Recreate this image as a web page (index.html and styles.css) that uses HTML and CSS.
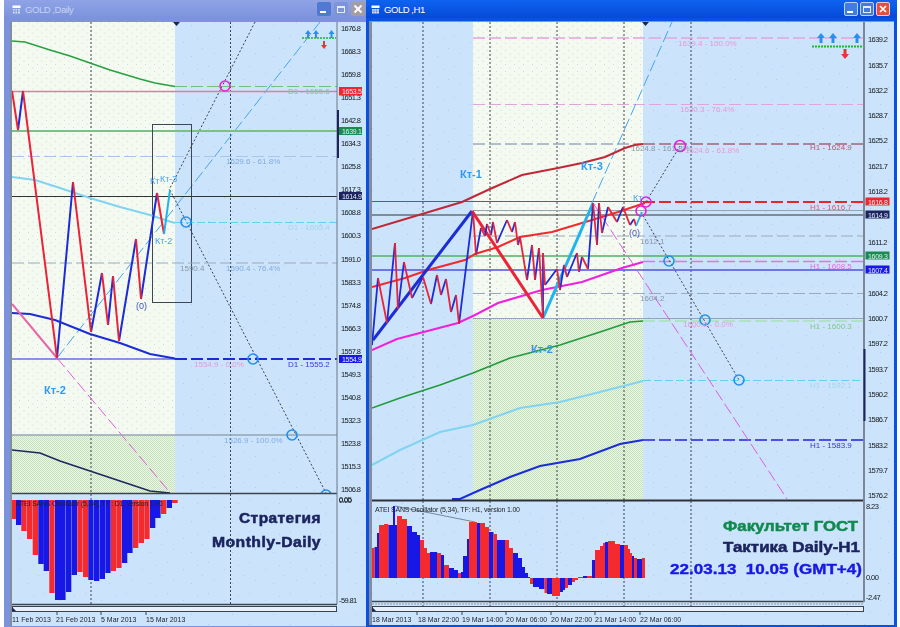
FILE: index.html
```html
<!DOCTYPE html>
<html lang="ru">
<head>
<meta charset="utf-8">
<title>GOLD</title>
<link rel="stylesheet" href="styles.css">
</head>
<body>
<main class="desk">

<section class="win win-left">
  <header class="titlebar">
    <svg class="winicon" viewBox="0 0 9 9"><rect x=".5" y=".5" width="8" height="2.5" class="wi-a"/><path d="M1 4h7v4.5H1z" class="wi-b"/><path d="M3 4v4.500M5.500 4v4.500M1 6h7" class="wi-c"/></svg>
    <span class="title">GOLD ,Daily</span>
    <span class="btns">
      <span class="btn btn-min"><i class="dash"></i></span>
      <span class="btn btn-max"><i class="box"></i></span>
      <span class="btn btn-close"><svg viewBox="0 0 14 14"><path d="M3.500 3.500l7 7M10.500 3.500l-7 7"/></svg></span>
    </span>
  </header>
  <div class="client">
    <svg class="chart" viewBox="12 22 350 604" width="350" height="604">
      <defs>
        <pattern id="dotsB" width="41" height="31" patternUnits="userSpaceOnUse"><rect width="41" height="31" class="f-blue"/><path d="M3 4h1v1H3zM19 11h1v1h-1zM33 7h1v1h-1zM9 22h1v1H9zM27 25h1v1h-1zM38 17h1v1h-1z" class="f-speck"/></pattern>
        <pattern id="dotsC" width="9" height="7" patternUnits="userSpaceOnUse"><rect width="9" height="7" class="f-cream"/><path d="M1 1h1v1H1zM5.500 4.500h1v1h-1z" class="f-speckc"/></pattern>
        <pattern id="hatch" width="2" height="2" patternUnits="userSpaceOnUse"><rect width="2" height="2" class="f-hl"/><path d="M0 0h1v1H0zM1 1h1v1H1z" class="f-hd"/></pattern>
        <clipPath id="clipL"><rect x="12" y="22" width="325" height="471"/></clipPath>
      </defs>
      <rect x="12" y="22" width="350" height="604" fill="url(#dotsB)"/>
      <rect x="12" y="22" width="163" height="413" fill="url(#dotsC)"/>
      <rect x="12" y="435" width="163" height="58" fill="url(#hatch)"/>
      <g clip-path="url(#clipL)">
        <path class="vdot" d="M91 22V493M230.500 22V493"/>
        <path class="s-lblue d-long" d="M57 358L320 22"/>
        <path class="s-black d-dot" d="M255 22L169 190M170 190L326 493"/>
        <polyline class="s-green w15" points="12,41 25,42 50,50 70,56 90,63 110,70 140,79 155,83 175,86.500"/>
        <path class="s-green2 d-long" d="M175 86.500H337"/>
        <path class="s-pink w15" d="M12 91.500H337"/>
        <path class="s-lgreen w2" d="M12 131H337"/>
        <path class="s-paleblue d-long w1" d="M12 156.500H337"/>
        <rect class="s-box" x="152.500" y="124.500" width="39" height="178"/>
        <path class="s-dark" d="M12 196.500H337"/>
        <polyline class="s-sky w2" points="12,177 35,180 60,188 90,198 120,207 150,215 165,220 175,223"/>
        <path class="s-sky2 d-mid" d="M175 222.500H337"/>
        <path class="s-gray d-long w1" d="M12 263H337"/>
        <path class="s-blue" d="M12 359H175"/>
        <polyline class="s-blue w2" points="12,313 30,314 55,320 90,334 120,343 150,354 175,358.500"/>
        <path class="s-blue w2 d-long" d="M175 359H337"/>
        <path class="s-mag2 w2" d="M12 304L57 358"/>
        <path class="s-mag d-long" d="M57 358L172 495"/>
        <path class="s-gray2 w15" d="M12 435H337"/>
        <polyline class="s-navy w15" points="12,450 40,453 60,461 90,471 120,481 150,491 170,493"/>
        <path class="s-zb w2" d="M18 130L23 91M57 358L73 182M91 332L102 273M108 325L113 276M119 341L136 239M141 299L157 193"/>
        <path class="s-zr w2" d="M12 91L18 130M23 91L57 358M73 182L91 332M102 273L108 325M113 276L119 341M136 239L141 299M157 193L164 234"/>
        <path class="s-zc w2" d="M164 234L170 190"/>
        <circle class="c-mag" cx="225" cy="86" r="5"/>
        <circle class="c-blue" cx="186" cy="222" r="5"/>
        <circle class="c-blue" cx="253" cy="359" r="5"/>
        <circle class="c-blue" cx="292" cy="435" r="5"/>
        <circle class="c-blue" cx="326" cy="495" r="5"/>
      </g>
      <path class="tri" d="M173 22h7l-3.500 4z"/>
      <path class="f-ua" d="M308 30l3 4h-2v4h-2v-4h-2zM316 30l3 4h-2v4h-2v-4h-2zM331.500 30l3 4h-2v4h-2v-4h-2z"/>
      <path class="s-lime w15 d-fine" d="M302 38H336"/>
      <path class="f-da" d="M323 41h2v4h2l-3 4-3-4h2z"/>

      <text class="lvl t-green" x="288" y="94">D1 - 1655.6</text>
      <text class="lvl t-fib" x="226" y="164">1629.6 - 61.8%</text>
      <text class="lvl t-sky" x="288" y="230">D1 - 1605.4</text>
      <text class="lvl t-gray" x="180" y="271">1590.4</text>
      <text class="lvl t-fib" x="226" y="271">1590.4 - 76.4%</text>
      <text class="lvl t-fibp" x="194" y="367">1554.9 - 0.0%</text>
      <text class="lvl t-blue" x="288" y="367">D1 - 1555.2</text>
      <text class="lvl t-fib" x="224" y="443">1526.9 - 100.0%</text>
      <text class="kt-b" x="44" y="394">Кт-2</text>
      <text class="kt" x="150" y="184">Кт</text>
      <text class="kt" x="160" y="182">Кт-3</text>
      <text class="kt" x="155" y="244">Кт-2</text>
      <text class="zero" x="136" y="309">(0)</text>

      <rect x="12" y="493.500" width="325" height="110" fill="url(#dotsB)"/>
      <path class="sep" d="M12 493.500H337"/>
      <path class="vdot" d="M91 494V612M230.500 494V612"/>
      <path class="f-red" d="M12 500h4v19h-4zM21.300 500h5.300v31h-5.300zM27 500h5.300v39h-5.300zM32.700 500h5.300v55h-5.300zM49.300 500h5.300v93h-5.300zM77.300 500h5.300v72h-5.300zM83 500h5.300v77h-5.300zM110.700 500h5.300v71h-5.300zM116.300 500h5.300v68h-5.300zM133 500h5.300v48h-5.300zM138.700 500h5.300v43h-5.300zM144.300 500h5.300v39h-5.300zM161 500h5.300v14h-5.300zM172 500h5.700v3H172z"/>
      <path class="f-bl" d="M16 500h5.300v25h-5.300zM38.300 500h5.300v64h-5.300zM43.700 500h5.300v71h-5.300zM55 500h5.300v100h-5.300zM60.300 500h5.300v100h-5.300zM66 500h5.300v92h-5.300zM71.700 500h5.300v75h-5.300zM88.300 500h5.300v80h-5.300zM94 500h5.300v81h-5.300zM99.700 500h5.300v79h-5.300zM105.300 500h5.300v73h-5.300zM122 500h5.300v63h-5.300zM127.300 500h5.300v53h-5.300zM150 500h5.300v28h-5.300zM155.300 500h5.300v18h-5.300zM166.700 500h5.300v8h-5.300z"/>
      <text class="ind" x="16" y="505.500">ATEI SANS Oscillator (5,34), TF : D1, version 1.00</text>
      <text class="big t-navy" x="239" y="523" textLength="82" lengthAdjust="spacingAndGlyphs">Стратегия</text>
      <text class="big t-navy" x="212" y="547" textLength="109" lengthAdjust="spacingAndGlyphs">Monthly-Daily</text>

      <path class="sep" d="M12 604.500H337"/>
      <rect class="tbar" x="12.500" y="606.500" width="324" height="5"/>
      <path class="tri" d="M12 607l4 4h-4z"/>
      <path class="tick" d="M57 612v3M101 612v3M146 612v3"/>
      <text class="tl" x="12" y="622">11 Feb 2013</text>
      <text class="tl" x="56" y="622">21 Feb 2013</text>
      <text class="tl" x="101" y="622">5 Mar 2013</text>
      <text class="tl" x="146" y="622">15 Mar 2013</text>

      <path class="axisl" d="M337 22V604"/>
      <path class="navybar" d="M338 110V158"/>
      <g class="ax">
        <text x="341" y="31">1676.8</text><text x="341" y="54">1668.3</text><text x="341" y="77">1659.8</text><text x="341" y="100">1651.3</text>
        <text x="341" y="123">1642.8</text><text x="341" y="146">1634.3</text><text x="341" y="169">1625.8</text><text x="341" y="192">1617.3</text>
        <text x="341" y="215">1608.8</text><text x="341" y="238">1600.3</text><text x="341" y="262">1591.0</text><text x="341" y="285">1583.3</text>
        <text x="341" y="308">1574.8</text><text x="341" y="331">1566.3</text><text x="341" y="354">1557.8</text><text x="341" y="377">1549.3</text>
        <text x="341" y="400">1540.8</text><text x="341" y="423">1532.3</text><text x="341" y="446">1523.8</text><text x="341" y="469">1515.3</text>
        <text x="341" y="492">1506.8</text><text x="339" y="502">0.05</text><text x="339" y="503">0.00</text><text x="339" y="603">-59.81</text>
      </g>
      <rect class="tag-r" x="339" y="87" width="24" height="8.500"/><text class="tagt" x="342" y="94">1653.5</text>
      <rect class="tag-g" x="339" y="127" width="24" height="8"/><text class="tagt" x="342" y="134">1639.1</text>
      <rect class="tag-n" x="339" y="192" width="24" height="8"/><text class="tagt" x="342" y="199">1614.9</text>
      <rect class="tag-b" x="339" y="355" width="24" height="8"/><text class="tagt" x="342" y="362">1554.9</text>
    </svg>
  </div>
</section>

<section class="win win-right">
  <header class="titlebar">
    <svg class="winicon" viewBox="0 0 9 9"><rect x=".5" y=".5" width="8" height="2.500" class="wi-a"/><path d="M1 4h7v4.500H1z" class="wi-b"/><path d="M3 4v4.500M5.500 4v4.500M1 6h7" class="wi-c"/></svg>
    <span class="title">GOLD ,H1</span>
    <span class="btns">
      <span class="btn btn-min"><i class="dash"></i></span>
      <span class="btn btn-max"><i class="box"></i></span>
      <span class="btn btn-close"><svg viewBox="0 0 14 14"><path d="M3.500 3.500l7 7M10.500 3.500l-7 7"/></svg></span>
    </span>
  </header>
  <div class="client">
    <svg class="chart" viewBox="372 22 522 603" width="522" height="603">
      <defs>
        <clipPath id="clipR"><rect x="372" y="22" width="492" height="478"/></clipPath>
      </defs>
      <rect x="372" y="22" width="522" height="603" fill="url(#dotsB)"/>
      <rect x="473" y="22" width="170" height="296" fill="url(#dotsC)"/>
      <rect x="473" y="318" width="170" height="182" fill="url(#hatch)"/>
      <g clip-path="url(#clipR)">
        <path class="vdot" d="M423 22V500M490 22V500M557 22V500M624 22V500M691 22V500"/>
        <path class="s-lpink w15 d-long" d="M473 38H864"/>
        <path class="s-lpink d-long" d="M473 104.500H864"/>
        <path class="s-gray w15 d-long" d="M473 144H643"/>
        <path class="s-redgray w15 d-long" d="M643 144H864"/>
        <path class="s-gray d-long" d="M473 236H864"/>
        <path class="s-gray d-long" d="M473 293.500H864"/>
        <path class="s-gray2" d="M473 318.500H864"/>
        <path class="s-green3 d-long" d="M643 321H864"/>
        <path class="s-red" d="M372 201.500H643"/>
        <path class="s-red w2 d-long" d="M643 202H864"/>
        <path class="s-gray2" d="M473 210.500H864"/>
        <path class="s-dark" d="M372 215H864"/>
        <path class="s-green4 w15" d="M372 256H864"/>
        <path class="s-mag3 w15 d-long" d="M643 261.500H864"/>
        <path class="s-vio w15" d="M372 270H864"/>
        <path class="s-sky2 d-mid" d="M643 380.500H864"/>
        <path class="s-vio w2 d-long" d="M643 440H864"/>

        <path class="s-lblue d-long" d="M592 203L672 22"/>
        <path class="s-mag d-long" d="M593 203L787 499"/>
        <path class="s-black d-dot" d="M646 202L680 146M641 212L739 380"/>

        <polyline class="s-brown w2" points="372,229 462,202 490,189 522,175 558,168 582,163 605,157 625,148 635,145 643,144"/>
        <polyline class="s-rma w2" points="372,287 405,278 428,270 465,260 475,254 498,247 520,237 552,232 592,220 618,212 645,203"/>
        <polyline class="s-mma w2" points="372,350 397,339 458,323 475,315 498,303 542,290 582,282 622,268 643,262"/>
        <polyline class="s-gma w15" points="372,408 400,398 440,385 473,373 510,358 560,345 600,332 630,322 643,321"/>
        <polyline class="s-sky w2" points="372,465 400,450 440,432 473,425 520,408 560,402 600,392 643,381"/>
        <polyline class="s-blue w2" points="452,499 460,499 480,490 510,477 540,466 580,459 620,444 643,440"/>

        <path class="s-zb w3" d="M373 340L472 211"/>
        <path class="s-zr w3" d="M472 211L543 318"/>
        <path class="s-zc w3" d="M543 318L593 203"/>

        <path class="s-zb w18" d="M372 345L378 278M387 323L395 243M398 309L404 262M412 298L423 277M431 304L437 275M441 295L446 279M451 312L456 295M459 324L473 211M476 255L481 228M485 236L487 224M491 235L493 222M497 243L507 220M512 232L515 222M518 245L520 237M527 280L532 245M535 280L539 248M543 318V253M545 285L557 269M560 290L564 265M567 277L577 253M579 272L582 257M588 269L593 203M597 245L599 203M602 233L608 207M617 222L623 207M630 225L634 219"/>
        <path class="s-zr w18" d="M378 278L387 323M395 243L398 309M404 262L412 298M423 277L431 304M437 275L441 295M446 279L451 312M456 295L459 324M473 211L476 255M481 228L485 236M487 224L491 235M493 222L497 243M507 220L512 232M515 222L518 245M520 237L527 280M532 245L535 280M539 248L543 318M543 253L545 285M557 269L560 290M564 265L567 277M577 253L579 272M582 257L588 269M593 203L597 245M599 203L602 233M608 207L617 222M623 207L630 225M634 219L636 226"/>
        <path class="s-zc w18" d="M636 226L642 212"/>

        <circle class="c-mag" cx="680" cy="146" r="5.500"/>
        <circle class="c-mag" cx="646" cy="202" r="5"/>
        <circle class="c-mag" cx="641" cy="211" r="5"/>
        <circle class="c-blue" cx="669" cy="261" r="5"/>
        <circle class="c-blue" cx="705" cy="320" r="5"/>
        <circle class="c-blue" cx="739" cy="380" r="5"/>
      </g>
      <path class="tri" d="M642 22h7l-3.500 4z"/>
      <path class="f-ua" d="M821 33l4 5h-2.500v5h-3v-5H817zM833 33l4 5h-2.500v5h-3v-5H829zM857 33l4 5h-2.500v5h-3v-5H853z"/>
      <path class="s-lime w2 d-fine" d="M812 46.500H863"/>
      <path class="f-da" d="M843.500 49h3v5h2.500l-4 5-4-5h2.500z"/>

      <text class="lvl t-fibp" x="678" y="46">1639.4 - 100.0%</text>
      <text class="lvl t-fibp" x="680" y="112">1630.3 - 76.4%</text>
      <text class="lvl t-gray" x="631" y="151">1624.8 - 161.8%</text>
      <text class="lvl t-fibp" x="685" y="153">1624.6 - 61.8%</text>
      <text class="lvl t-rose" x="810" y="150">H1 - 1624.9</text>
      <text class="lvl t-rose2" x="810" y="210">H1 - 1616.7</text>
      <text class="lvl t-gray" x="640" y="244">1612.1</text>
      <text class="lvl t-mag" x="810" y="269">H1 - 1608.5</text>
      <text class="lvl t-gray" x="640" y="301">1604.2</text>
      <text class="lvl t-fibp" x="683" y="327">1600.0 - 0.0%</text>
      <text class="lvl t-green" x="810" y="329">H1 - 1600.3</text>
      <text class="lvl t-sky" x="810" y="388">H1 - 1592.1</text>
      <text class="lvl t-blue" x="810" y="448">H1 - 1583.9</text>
      <text class="kt-b" x="460" y="178">Кт-1</text>
      <text class="kt-b" x="581" y="170">Кт-3</text>
      <text class="kt-b" x="531" y="353">Кт-2</text>
      <text class="kt" x="633" y="201">Кт</text>
      <text class="zero" x="629" y="236">(0)</text>

      <rect x="372" y="500.500" width="492" height="101" fill="url(#dotsB)"/>
      <path class="sepw" d="M372 500.500H864"/>
      <path class="vdot" d="M423 501V612M490 501V612M557 501V612M624 501V612M691 501V612"/>
      <path class="f-bl" d="M374.500 578V547H377V533H379V578zM388.300 578V525H393V506H395V525H397V578zM407 578V526H412V532H417V578zM413 578V535H420V578zM430 578V552H437V578zM441 578V555H444V578zM449 578V568H454V570H458V578zM461 578V572H463V578zM463 578V556H467V578zM467 578V539H469V578zM477 578V523H480V578zM489 578V532H493.500V578zM497 578V540H505V578zM513 578V553H518V558H522V578zM522 578V567H525V578zM525 578V573H528V577H530V578zM533 578V587H539V589H544.500V578zM547 578V594H552V578zM560 578V592H563V590H565V578zM568 578V585H572V578zM583 578V576H587V578zM592 578V560H595V578zM605 578V542H608V578zM620 578V545H624V578zM632 578V556H634V578zM637 578V559H642V578z"/>
      <path class="f-red" d="M372 578V548H374.500V578zM379 578V525H384V524H388.300V578zM397 578V516H402V519H407V578zM420 578V540H424V548H427V578zM427 578V553H430V578zM437 578V553H441V578zM444 578V565H449V578zM458 578V573H461V578zM469 578V522H477V578zM480 578V523H485V527H489V578zM493.500 578V534H497V578zM505 578V540H509V548H513V578zM530 578V584H533V578zM544.500 578V593H547V578zM552 578V596H560V578zM565 578V588H568V578zM572 578V582H575V580H578V578zM578 578V577H583V578zM587 578V576H592V578zM595 578V550H600V546H603V543H605V578zM608 578V541H615V578zM615 578V544H620V578zM624 578V545H628V549H630V553H632V578zM634 578V558H637V578zM642 578V558H645V578z"/>
      <path class="s-line" d="M395 506L475 522"/>
      <text class="ind" x="375" y="511.500">ATEI SANS Oscillator (5,34), TF: H1, version 1.00</text>
      <text class="big2 t-teal" x="723" y="531" textLength="135" lengthAdjust="spacingAndGlyphs">Факультет ГОСТ</text>
      <text class="big2 t-navy" x="723" y="552" textLength="137" lengthAdjust="spacingAndGlyphs">Тактика Daily-H1</text>
      <text class="big2 t-royal" x="670" y="574" textLength="192" lengthAdjust="spacingAndGlyphs" xml:space="preserve">22.03.13  10.05 (GMT+4)</text>

      <path class="sep" d="M372 601.500H864"/>
      <path class="sepg" d="M372 604H864"/>
      <rect class="tbar" x="372.500" y="606.500" width="491" height="5"/>
      <path class="tri" d="M372 607l4 4h-4z"/>
      <path class="tick" d="M417 612v3M462 612v3M506 612v3M551 612v3M595 612v3M640 612v3"/>
      <text class="tl" x="372" y="622">18 Mar 2013</text>
      <text class="tl" x="418" y="622">18 Mar 22:00</text>
      <text class="tl" x="462" y="622">19 Mar 14:00</text>
      <text class="tl" x="506" y="622">20 Mar 06:00</text>
      <text class="tl" x="551" y="622">20 Mar 22:00</text>
      <text class="tl" x="595" y="622">21 Mar 14:00</text>
      <text class="tl" x="640" y="622">22 Mar 06:00</text>

      <path class="axisr" d="M864 22V602"/>
      <path class="navybar" d="M864.500 349V421"/>
      <g class="ax">
        <text x="868" y="42">1639.2</text><text x="868" y="67.500">1635.7</text><text x="868" y="93">1632.2</text><text x="868" y="118">1628.7</text>
        <text x="868" y="143">1625.2</text><text x="868" y="169">1621.7</text><text x="868" y="194">1618.2</text><text x="868" y="245">1611.2</text>
        <text x="868" y="296">1604.2</text><text x="868" y="321">1600.7</text><text x="868" y="346">1597.2</text><text x="868" y="372">1593.7</text>
        <text x="868" y="397">1590.2</text><text x="868" y="422">1586.7</text><text x="868" y="448">1583.2</text><text x="868" y="473">1579.7</text>
        <text x="868" y="498">1576.2</text><text x="866" y="509">8.23</text><text x="866" y="580">0.00</text><text x="866" y="600">-2.47</text>
      </g>
      <rect class="tag-r" x="865.500" y="197.500" width="24" height="8"/><text class="tagt" x="868" y="204.500">1616.8</text>
      <rect class="tag-n" x="865.500" y="210.500" width="24" height="8"/><text class="tagt" x="868" y="217.500">1614.9</text>
      <rect class="tag-g" x="865.500" y="251.500" width="24" height="8"/><text class="tagt" x="868" y="258.500">1609.3</text>
      <rect class="tag-b" x="865.500" y="265.500" width="24" height="8"/><text class="tagt" x="868" y="272.500">1607.4</text>
    </svg>
  </div>
</section>

</main>
</body>
</html>
```

FILE: styles.css
```css
html, body { margin: 0; padding: 0; background: #fff; }
.desk { display: flex; width: 900px; height: 627px; padding-left: 4px; box-sizing: border-box; overflow: hidden; font-family: "Liberation Sans", Arial, sans-serif; }

.win { display: flex; flex-direction: column; height: 627px; box-sizing: border-box; }
.win-left { width: 362px; background: #7b92dc; padding: 0 0 1px 6px; }
.win-right { width: 531px; background: #0a50e2; padding: 0 3px 2px 3px; }

.titlebar { display: flex; align-items: center; height: 18px; flex: none; }
.win-left .titlebar { margin-left: -6px; padding-left: 8px; background: linear-gradient(#8fa3e6, #7c93dc); }
.win-right .titlebar { margin: 0 -3px; padding-left: 5px; background: linear-gradient(#0e63f0, #0649d8); }
.winicon { width: 9px; height: 9px; flex: none; }
.wi-a { fill: #fff; }
.wi-b { fill: #cfdcf8; }
.wi-c { stroke: #6d88d8; stroke-width: .7; fill: none; }
.title { margin-left: 4px; font-size: 9.500px; color: #fff; letter-spacing: -.45px; }
.win-left .title { color: #c6d2f2; }
.btns { margin-left: auto; display: flex; gap: 2px; }
.win-left .btns { margin-right: 1px; gap: 3px; }
.win-right .btns { margin-right: 7px; }
.btn { display: flex; align-items: center; justify-content: center; width: 14px; height: 14px; border-radius: 2px; box-sizing: border-box; }
.win-left .btn-min { background: #4f7ad0; }
.win-left .btn-max { background: #7d95d8; }
.win-left .btn-close { background: #a39da4; }
.win-right .btn-min, .win-right .btn-max { background: #3f7de4; border: 1px solid #bcd0f4; }
.win-right .btn-close { background: #e2503e; border: 1px solid #f2c8c0; }
.dash { display: block; width: 6px; height: 2px; background: #fff; margin-top: 6px; margin-right: 2px; }
.box { display: block; width: 8px; height: 7px; border: 1px solid #e4ecfb; border-top-width: 2px; box-sizing: border-box; }
.btn-close svg { width: 14px; height: 14px; stroke: #fff; stroke-width: 2; fill: none; }

.client { flex: 1; min-height: 0; margin-top: 3px; border-top: 1px solid #8f96a4; border-left: 2px solid #868d9a; background: #cce4fb; display: flex; }
.win-right .client { border-left-width: 3px; }
.chart { display: block; flex: none; filter: blur(.4px); }

.f-blue { fill: #cce4fb; }
.f-speck { fill: #aecdf0; }
.f-cream { fill: #f5faf0; }
.f-speckc { fill: #c5dcec; }
.f-hl { fill: #eef7e6; }
.f-hd { fill: #c2e2bc; }
.f-red { fill: #f52a2e; }
.f-bl { fill: #1818e6; }
.f-ua { fill: #2b8ff0; }
.f-da { fill: #ee3030; }

polyline, .vdot, .s-black, .s-lblue, .s-green, .s-green2, .s-pink, .s-lgreen, .s-paleblue, .s-box, .s-dark, .s-sky, .s-sky2, .s-gray, .s-gray2, .s-blue, .s-mag, .s-mag2, .s-mag3, .s-navy, .s-zb, .s-zr, .s-zc, .s-lime, .s-lpink, .s-redgray, .s-green3, .s-green4, .s-red, .s-vio, .s-brown, .s-rma, .s-mma, .s-gma, .s-line, .sep, .sepg, .sepw, .tick, .axisl, .axisr, .navybar, .c-mag, .c-blue { fill: none; }
.w1 { stroke-width: 1; }
.w15 { stroke-width: 1.5; }
.w18 { stroke-width: 1.8; }
.w2 { stroke-width: 2; }
.w3 { stroke-width: 3; }
.d-long { stroke-dasharray: 12 4; }
.d-mid { stroke-dasharray: 8 3; }
.d-dot { stroke-dasharray: 2 2; }
.d-fine { stroke-dasharray: 2 1; }
.vdot { stroke: #3c4250; stroke-dasharray: 2 2; }
.s-black { stroke: #3a4250; }
.s-lblue { stroke: #45a5f0; }
.s-green { stroke: #28a040; }
.s-green2 { stroke: #70c080; }
.s-pink { stroke: #e07ca0; }
.s-lgreen { stroke: #7cc088; }
.s-paleblue { stroke: #a8c6ec; }
.s-box { stroke: #3c4656; fill: none; }
.s-dark { stroke: #303438; }
.s-sky { stroke: #80d4f2; }
.s-sky2 { stroke: #60d2f2; }
.s-gray { stroke: #9aaabc; }
.s-gray2 { stroke: #94a4b4; }
.s-blue { stroke: #1c2cd8; }
.s-mag { stroke: #e05ce0; }
.s-mag2 { stroke: #e666a8; }
.s-mag3 { stroke: #e870e0; }
.s-navy { stroke: #1c2860; }
.s-zb { stroke: #1c2cd8; }
.s-zr { stroke: #ec2238; }
.s-zc { stroke: #20b4ee; }
.s-lime { stroke: #18b830; }
.s-lpink { stroke: #e2a4dc; }
.s-redgray { stroke: #a06478; }
.s-green3 { stroke: #94e094; }
.s-green4 { stroke: #50b060; }
.s-red { stroke: #e42828; }
.s-vio { stroke: #5050e6; }
.s-brown { stroke: #c02838; }
.s-rma { stroke: #f02a2e; }
.s-mma { stroke: #f020dc; }
.s-gma { stroke: #209a3c; }
.s-line { stroke: #7088a4; }
.c-mag { stroke: #e81ce0; stroke-width: 1.6; }
.c-blue { stroke: #2090f0; stroke-width: 1.6; }
.tri { fill: #1c2450; }
.sep { stroke: #3c4450; stroke-width: 1.4; }
.sepw { stroke: #2c3038; stroke-width: 2; }
.sepg { stroke: #8a94a0; stroke-dasharray: 2 1; }
.tbar { fill: #e8f0fa; stroke: #3a4250; stroke-width: 1; }
.tick { stroke: #3a4250; }
.axisl { stroke: #6c7684; }
.axisr { stroke: #7c8694; stroke-width: 2; }
.navybar { stroke: #1c2460; stroke-width: 2; }

text { font-family: "Liberation Sans", Arial, sans-serif; }
.ax text { font-size: 7.5px; fill: #14181e; letter-spacing: -.6px; }
.lvl { font-size: 8px; }
.t-green { fill: #80c888; }
.t-fib { fill: #80aae2; }
.t-fibp { fill: #e498d6; }
.t-sky { fill: #a0d6ee; }
.t-gray { fill: #8896a8; }
.t-blue { fill: #3838d8; }
.t-rose { fill: #c85070; }
.t-rose2 { fill: #ec5070; }
.t-mag { fill: #e868e0; }
.kt-b { font-size: 11px; font-weight: 700; fill: #2f9aef; }
.kt { font-size: 9px; fill: #4aa4ec; }
.zero { font-size: 9px; fill: #4454c0; }
.ind { font-size: 7px; fill: #202428; letter-spacing: -.2px; }
.tl { font-size: 7px; fill: #20242c; }
.tagt { font-size: 7px; fill: #e8eef6; letter-spacing: -.3px; }
.tag-r { fill: #f0262c; }
.tag-g { fill: #1a8a50; }
.tag-n { fill: #1c2460; }
.tag-b { fill: #1818e6; }
.big { font-size: 14px; font-weight: 700; letter-spacing: .4px; }
.big2 { font-size: 15px; font-weight: 700; white-space: pre; }
.t-navy { fill: #1c2460; stroke: #1c2460; stroke-width: .5; }
.t-teal { fill: #108a50; stroke: #108a50; stroke-width: .5; }
.t-royal { fill: #1818e6; stroke: #1818e6; stroke-width: .4; }
```
